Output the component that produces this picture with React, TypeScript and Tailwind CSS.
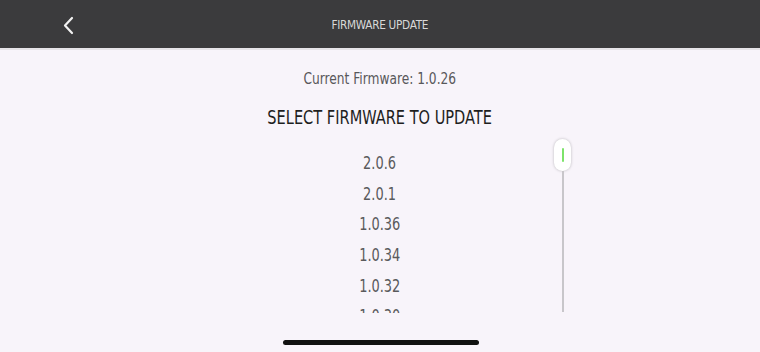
import React from "react";

const versions = ["2.0.6", "2.0.1", "1.0.36", "1.0.34", "1.0.32", "1.0.30"];

const font = { fontFamily: '"DejaVu Sans Condensed", "Liberation Sans", sans-serif' };

export default function App() {
  return (
    <div className="w-[760px] h-[352px] bg-[#f8f4fa] flex flex-col overflow-hidden" style={font}>
      <div className="h-[48px] bg-[#3b3b3d] flex items-center relative shrink-0">
        <svg className="absolute left-[62px] top-[16px]" width="13" height="19" viewBox="0 0 13 19">
          <path d="M10 2 L3 9.5 L10 17" stroke="#f2f2f2" strokeWidth="2.2" fill="none" strokeLinecap="round" strokeLinejoin="round" />
        </svg>
        <div className="w-full text-center">
          <span className="inline-block scale-x-[0.9] text-[13px] text-[#d8d8d8] tracking-tight">FIRMWARE UPDATE</span>
        </div>
      </div>
      <div className="h-[2px] bg-[#e6e4e8] shrink-0" />
      <div className="flex flex-col items-center relative flex-1">
        <div className="mt-[19px] text-[16px] leading-[20px] text-[#58585a]">
          <span className="inline-block scale-x-[0.85]">Current Firmware: 1.0.26</span>
        </div>
        <div className="mt-[16px] text-[20px] leading-[24px] text-[#1e1e1e]">
          <span className="inline-block scale-x-[0.81]">SELECT FIRMWARE TO UPDATE</span>
        </div>
        <div className="mt-[19px] h-[165px] overflow-hidden flex flex-col items-center">
          {versions.map((v) => (
            <div key={v} className="h-[30.7px] shrink-0 text-[18px] leading-[30px] text-[#5a5a5c]">
              <span className="inline-block scale-x-[0.8]">{v}</span>
            </div>
          ))}
        </div>
        <div className="absolute left-[554px] top-[89px] flex flex-col items-center">
          <div className="w-[17px] h-[32px] rounded-full bg-white shadow-[0_0_3px_rgba(0,0,0,0.25)] flex items-center justify-center">
            <div className="w-[2px] h-[14px] bg-[#7de36a] rounded-full" />
          </div>
          <div className="w-[2px] h-[141px] bg-[#c8c6ca]" />
        </div>
        <div className="absolute left-[283px] top-[290px] w-[196px] h-[5px] rounded-full bg-[#111]" />
      </div>
    </div>
  );
}
